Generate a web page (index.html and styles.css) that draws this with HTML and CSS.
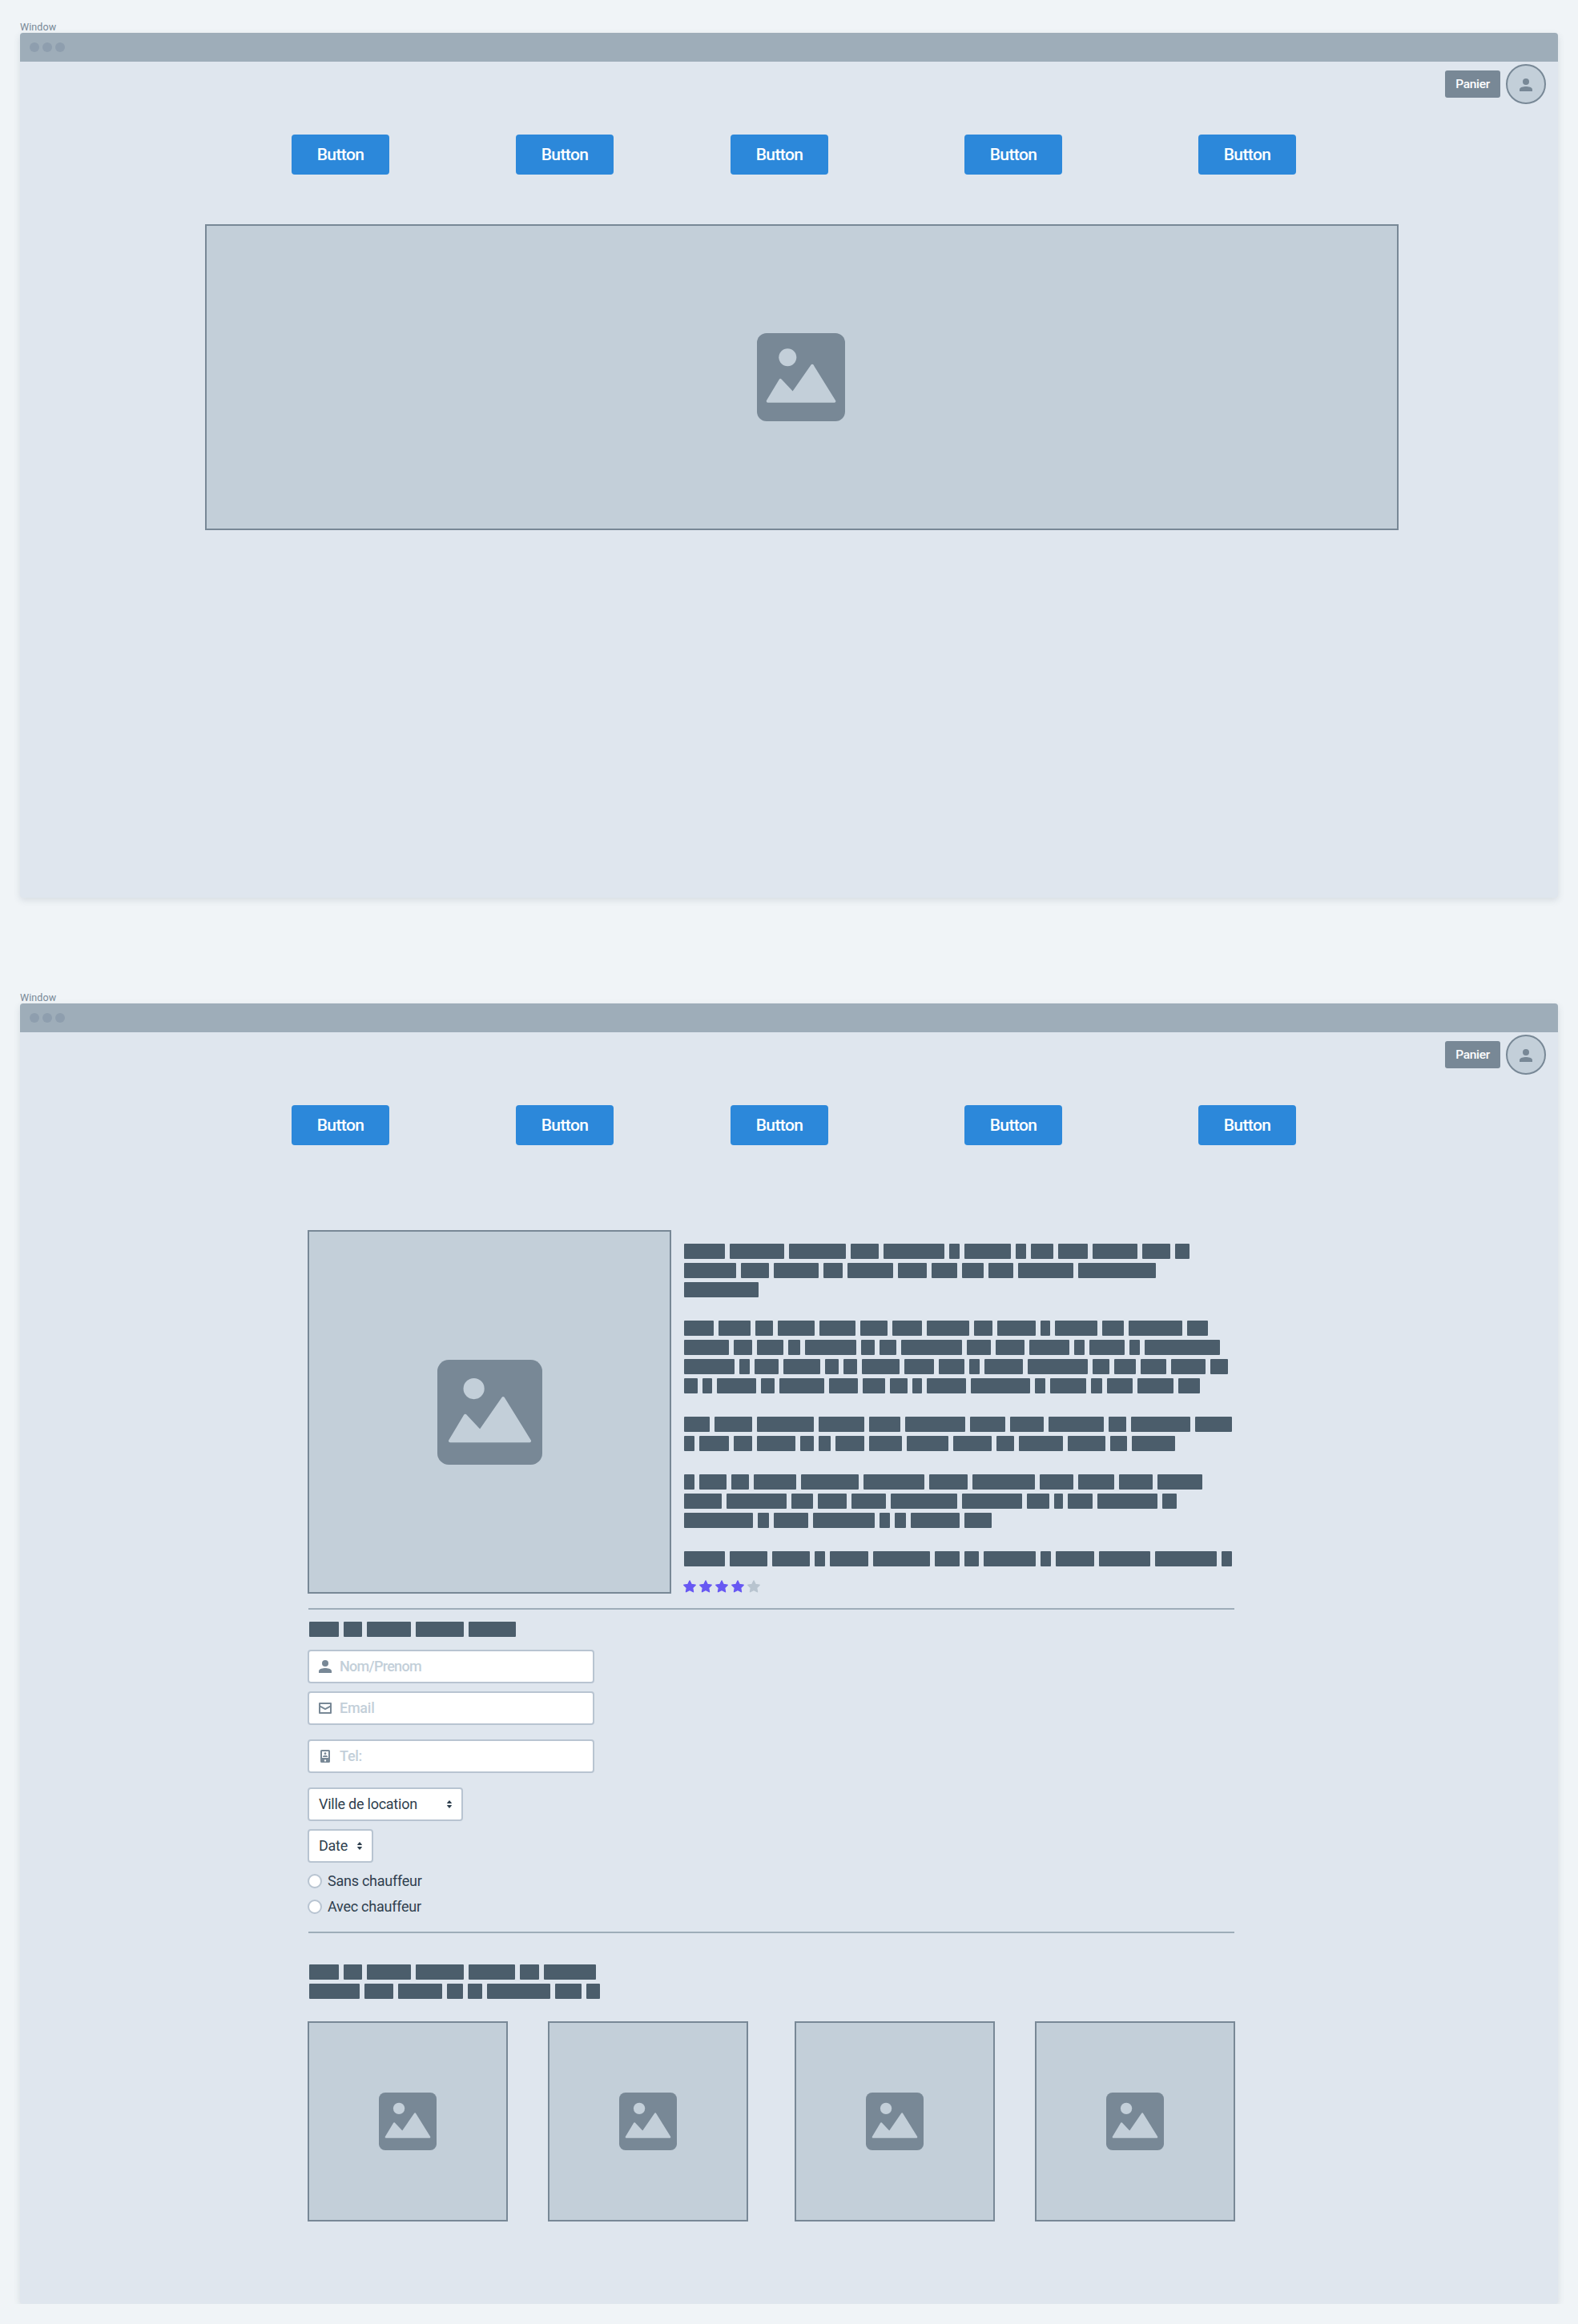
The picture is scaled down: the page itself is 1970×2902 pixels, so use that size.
FILE: index.html
```html
<!DOCTYPE html>
<html lang="fr">
<head>
<meta charset="utf-8">
<title>Location de voitures</title>
<link rel="stylesheet" href="styles.css">
</head>
<body>
<svg class="sprite" width="0" height="0" aria-hidden="true">
  <symbol id="picture" viewBox="0 0 110 110">
    <rect width="110" height="110" rx="12" fill="#788896"/>
    <circle cx="38.300" cy="30.300" r="11" fill="#c3cfd9"/>
    <path d="M13.500 85 L29.300 58.700 L44.800 75.300 L69 40.500 L96.500 85 Z" fill="#c3cfd9" stroke="#c3cfd9" stroke-width="3.500" stroke-linejoin="round"/>
  </symbol>
  <symbol id="person" viewBox="0 0 16 16">
    <circle cx="8" cy="4" r="4"/>
    <path d="M0 16V13.500C0 11 5 10 8 10s8 1 8 3.500V16z"/>
  </symbol>
  <symbol id="mail" viewBox="0 0 16 14">
    <path fill-rule="evenodd" d="M1 0h14a1 1 0 0 1 1 1v12a1 1 0 0 1-1 1H1a1 1 0 0 1-1-1V1a1 1 0 0 1 1-1zM2 2v1.700l6 3.300 6-3.300V2zM2 6v6h12V6L8 9.300z"/>
  </symbol>
  <symbol id="phone" viewBox="0 0 12 16">
    <path fill-rule="evenodd" d="M1.500 0h9A1.500 1.500 0 0 1 12 1.500v13a1.500 1.500 0 0 1-1.500 1.500h-9A1.500 1.500 0 0 1 0 14.500v-13A1.500 1.500 0 0 1 1.500 0zM2 2v8h8V2zM6 12.200a1.200 1.200 0 1 0 0 2.400 1.200 1.200 0 0 0 0-2.400z"/>
    <circle cx="6" cy="4.700" r="1.400"/>
    <path d="M3 9V8.400C3 7.400 4.800 7 6 7s3 .4 3 1.400V9z"/>
  </symbol>
  <symbol id="star" viewBox="0 0 16 16">
    <path d="M8 1 10.200 5.500 15.200 6.200 11.600 9.700 12.500 14.700 8 12.300 3.500 14.700 4.400 9.700 .8 6.200 5.800 5.500z" stroke="currentColor" stroke-width="1.400" stroke-linejoin="round"/>
  </symbol>
  <symbol id="sort" viewBox="0 0 6 10">
    <path d="M3 0 5.800 3.200V4H.2V3.200zM3 10 .2 6.800V6h5.600v.8z"/>
  </symbol>
</svg>

<section class="frame">
  <div class="label">Window</div>
  <div class="window home">
    <div class="titlebar"><i></i><i></i><i></i></div>
    <div class="account">
      <button class="cart">Panier</button>
      <span class="avatar"><svg width="16" height="16"><use href="#person"/></svg></span>
    </div>
    <nav class="menu">
      <button>Button</button><button>Button</button><button>Button</button><button>Button</button><button>Button</button>
    </nav>
    <div class="picture banner"><svg><use href="#picture"/></svg></div>
  </div>
</section>

<section class="frame">
  <div class="label">Window</div>
  <div class="window detail">
    <div class="titlebar"><i></i><i></i><i></i></div>
    <div class="account">
      <button class="cart">Panier</button>
      <span class="avatar"><svg width="16" height="16"><use href="#person"/></svg></span>
    </div>
    <nav class="menu">
      <button>Button</button><button>Button</button><button>Button</button><button>Button</button><button>Button</button>
    </nav>
    <main class="content">
      <div class="product">
        <div class="picture cover"><svg><use href="#picture"/></svg></div>
        <div class="summary">
          <div class="words" data-text="description"></div>
          <div class="rating">
            <svg><use href="#star"/></svg><svg><use href="#star"/></svg><svg><use href="#star"/></svg><svg><use href="#star"/></svg><svg class="off"><use href="#star"/></svg>
          </div>
        </div>
      </div>
      <hr>
      <div class="words" data-text="formTitle"></div>
      <form class="booking">
        <label class="field"><span class="icon"><svg width="16" height="16"><use href="#person"/></svg></span><span class="hint name">Nom/Prenom</span></label>
        <label class="field"><span class="icon"><svg width="16" height="14"><use href="#mail"/></svg></span><span class="hint email">Email</span></label>
        <label class="field spaced"><span class="icon"><svg width="12" height="16"><use href="#phone"/></svg></span><span class="hint tel">Tel:</span></label>
        <div class="select city spaced"><span>Ville de location</span><svg width="6" height="10"><use href="#sort"/></svg></div>
        <div class="select date"><span>Date</span><svg width="6" height="10"><use href="#sort"/></svg></div>
        <div class="radios">
          <label class="radio"><i></i><span>Sans chauffeur</span></label>
          <label class="radio"><i></i><span>Avec chauffeur</span></label>
        </div>
      </form>
      <hr>
      <div class="words related" data-text="relatedTitle"></div>
      <div class="cards">
        <div class="picture"><svg><use href="#picture"/></svg></div>
        <div class="picture"><svg><use href="#picture"/></svg></div>
        <div class="picture"><svg><use href="#picture"/></svg></div>
        <div class="picture"><svg><use href="#picture"/></svg></div>
      </div>
    </main>
  </div>
</section>
<script src="words.js"></script>
</body>
</html>
```
FILE: styles.css
```css
* { box-sizing: border-box; }
body { margin: 0; background: #f0f4f7; font-family: Roboto, "Liberation Sans", sans-serif; color: #2f404e; }
button { border: 0; padding: 0; color: #fff; font-family: inherit; font-weight: 500; }
svg { display: block; fill: currentColor; }
.sprite { position: absolute; }

.frame { padding: 25px 25px 0; }
.frame + .frame { padding-top: 116px; }
.label { height: 16px; line-height: 18px; font-size: 12.500px; color: #788896; letter-spacing: .1px; }
.window { background: #dfe6ee; border-radius: 4px; overflow: hidden; box-shadow: 0 3px 8px rgba(60, 80, 100, .14); }
.home { height: 1080px; }
.detail { height: 1624px; }
.titlebar { height: 36px; padding-left: 12px; display: flex; align-items: center; gap: 4px; background: #9eadb9; }
.titlebar i { width: 12px; height: 12px; border-radius: 50%; background: #8e9eae; }

.account { display: flex; justify-content: flex-end; align-items: center; gap: 7px; padding: 3px 15px 0 0; }
.cart { width: 69px; height: 34px; border-radius: 3px; background: #788896; font-size: 15.500px; letter-spacing: -.3px; }
.avatar { width: 50px; height: 50px; display: flex; align-items: center; justify-content: center; border: 2px solid #788896; border-radius: 50%; background: #c3cfd9; color: #788896; }
.avatar svg { margin-top: 1px; }

.menu { display: grid; grid-template-columns: 280px 268px 292px 292px 122px; margin: 38px 0 0 339px; }
.menu button { width: 122px; height: 50px; border-radius: 4px; background: #2c88da; font-size: 21px; letter-spacing: -.6px; }

.picture { display: flex; align-items: center; justify-content: center; border: 2px solid #788896; background: #c3cfd9; }
.banner { width: 1490px; height: 382px; margin: 62px 0 0 231px; padding-right: 2px; }
.banner svg { width: 110px; height: 110px; }

.content { width: 1158px; margin: 106px 0 0 359px; }
.product { display: flex; gap: 16px; }
.cover { width: 454px; height: 454px; flex: none; }
.cover svg { width: 131px; height: 131px; }
.summary { padding-top: 17px; }

.words { display: flex; flex-direction: column; gap: 5px; padding-left: 2px; }
.summary .words { padding: 0; }
.line { display: flex; gap: 6px; height: 19px; }
.line i { flex: none; border-radius: 1px; background: #4b5d6b; }

.rating { display: flex; gap: 4px; margin: 17px 0 0 -1px; color: #6758f3; }
.rating svg { width: 16px; height: 16px; }
.rating .off { color: #b8c4cf; }

hr { width: 1156px; height: 2px; margin: 18px 0 15px 1px; border: 0; background: #9eadb9; }
.booking { margin-top: 16px; display: flex; flex-direction: column; align-items: flex-start; gap: 10px; font-size: 18px; line-height: 20px; letter-spacing: -.25px; }
.field, .select { height: 42px; display: flex; align-items: center; border: 2px solid #b8c4d1; border-radius: 4px; background: #fff; }
.field { width: 358px; padding-left: 12px; gap: 10px; }
.spaced { margin-top: 8px; }
.icon { width: 16px; display: flex; justify-content: center; color: #788896; }
.hint { color: #c3cfd9; font-weight: 500; }
.name { letter-spacing: -.7px; }
.select { justify-content: space-between; padding: 0 12px; }
.city { width: 194px; }
.date { width: 82px; }
.radios { display: flex; flex-direction: column; gap: 14px; margin-top: 4px; }
.radio { height: 18px; display: flex; align-items: center; gap: 7px; }
.radio i { width: 18px; height: 18px; border: 2px solid #b8c4d1; border-radius: 50%; background: #fff; }
.booking + hr { margin: 22px 0 39px 1px; }
.cards { display: grid; grid-template-columns: 300px 308px 300px 250px; margin-top: 28px; }
.cards .picture { width: 250px; height: 250px; }
.cards svg { width: 72px; height: 72px; }
```
FILE: words.js
```
// Word edges of each redacted line, in thirds of a pixel; an empty list is a blank line.
const texts = {
  description: [
    [42, 214, 436, 665, 788, 1035, 1093, 1285, 1342, 1442, 1572, 1759, 1882, 1934],
    [42, 255, 378, 563, 655, 842, 969, 1083, 1182, 1293, 1519, 1809],
    [42, 321],
    [],
    [42, 172, 309, 393, 549, 703, 822, 951, 1128, 1215, 1377, 1431, 1607, 1707, 1925, 2004],
    [42, 228, 315, 432, 494, 704, 774, 855, 1100, 1209, 1336, 1502, 1560, 1710, 1768, 2048],
    [42, 249, 306, 414, 570, 639, 709, 868, 995, 1110, 1167, 1329, 1571, 1653, 1752, 1867, 2012, 2078],
    [42, 111, 165, 330, 400, 585, 712, 812, 896, 951, 1115, 1357, 1413, 1566, 1627, 1740, 1894, 1975],
    [],
    [42, 157, 315, 546, 735, 870, 1113, 1263, 1407, 1632, 1716, 1956, 2094],
    [42, 99, 228, 316, 477, 546, 609, 735, 876, 1050, 1211, 1296, 1480, 1638, 1720, 1882],
    [],
    [42, 99, 218, 302, 481, 714, 960, 1122, 1374, 1518, 1671, 1815, 1982],
    [42, 200, 443, 542, 669, 816, 1083, 1326, 1428, 1479, 1590, 1833, 1887],
    [42, 319, 378, 525, 774, 831, 891, 1092, 1194],
    [],
    [42, 214, 372, 532, 588, 750, 981, 1092, 1164, 1377, 1434, 1596, 1806, 2056, 2094]
  ],
  formTitle: [[48, 178, 264, 447, 645, 822]],
  relatedTitle: [
    [48, 178, 264, 447, 645, 838, 926, 1122],
    [48, 255, 381, 563, 642, 713, 969, 1085, 1138]
  ]
};
const GAP = 6;

document.querySelectorAll('.words').forEach(block => {
  texts[block.dataset.text].forEach(edges => {
    const line = document.createElement('div');
    line.className = 'line';
    for (let i = 0; i < edges.length - 1; i++) {
      const last = i === edges.length - 2;
      const word = document.createElement('i');
      word.style.width = (edges[i + 1] - edges[i]) / 3 - (last ? 0 : GAP) + 'px';
      line.append(word);
    }
    block.append(line);
  });
});
```
